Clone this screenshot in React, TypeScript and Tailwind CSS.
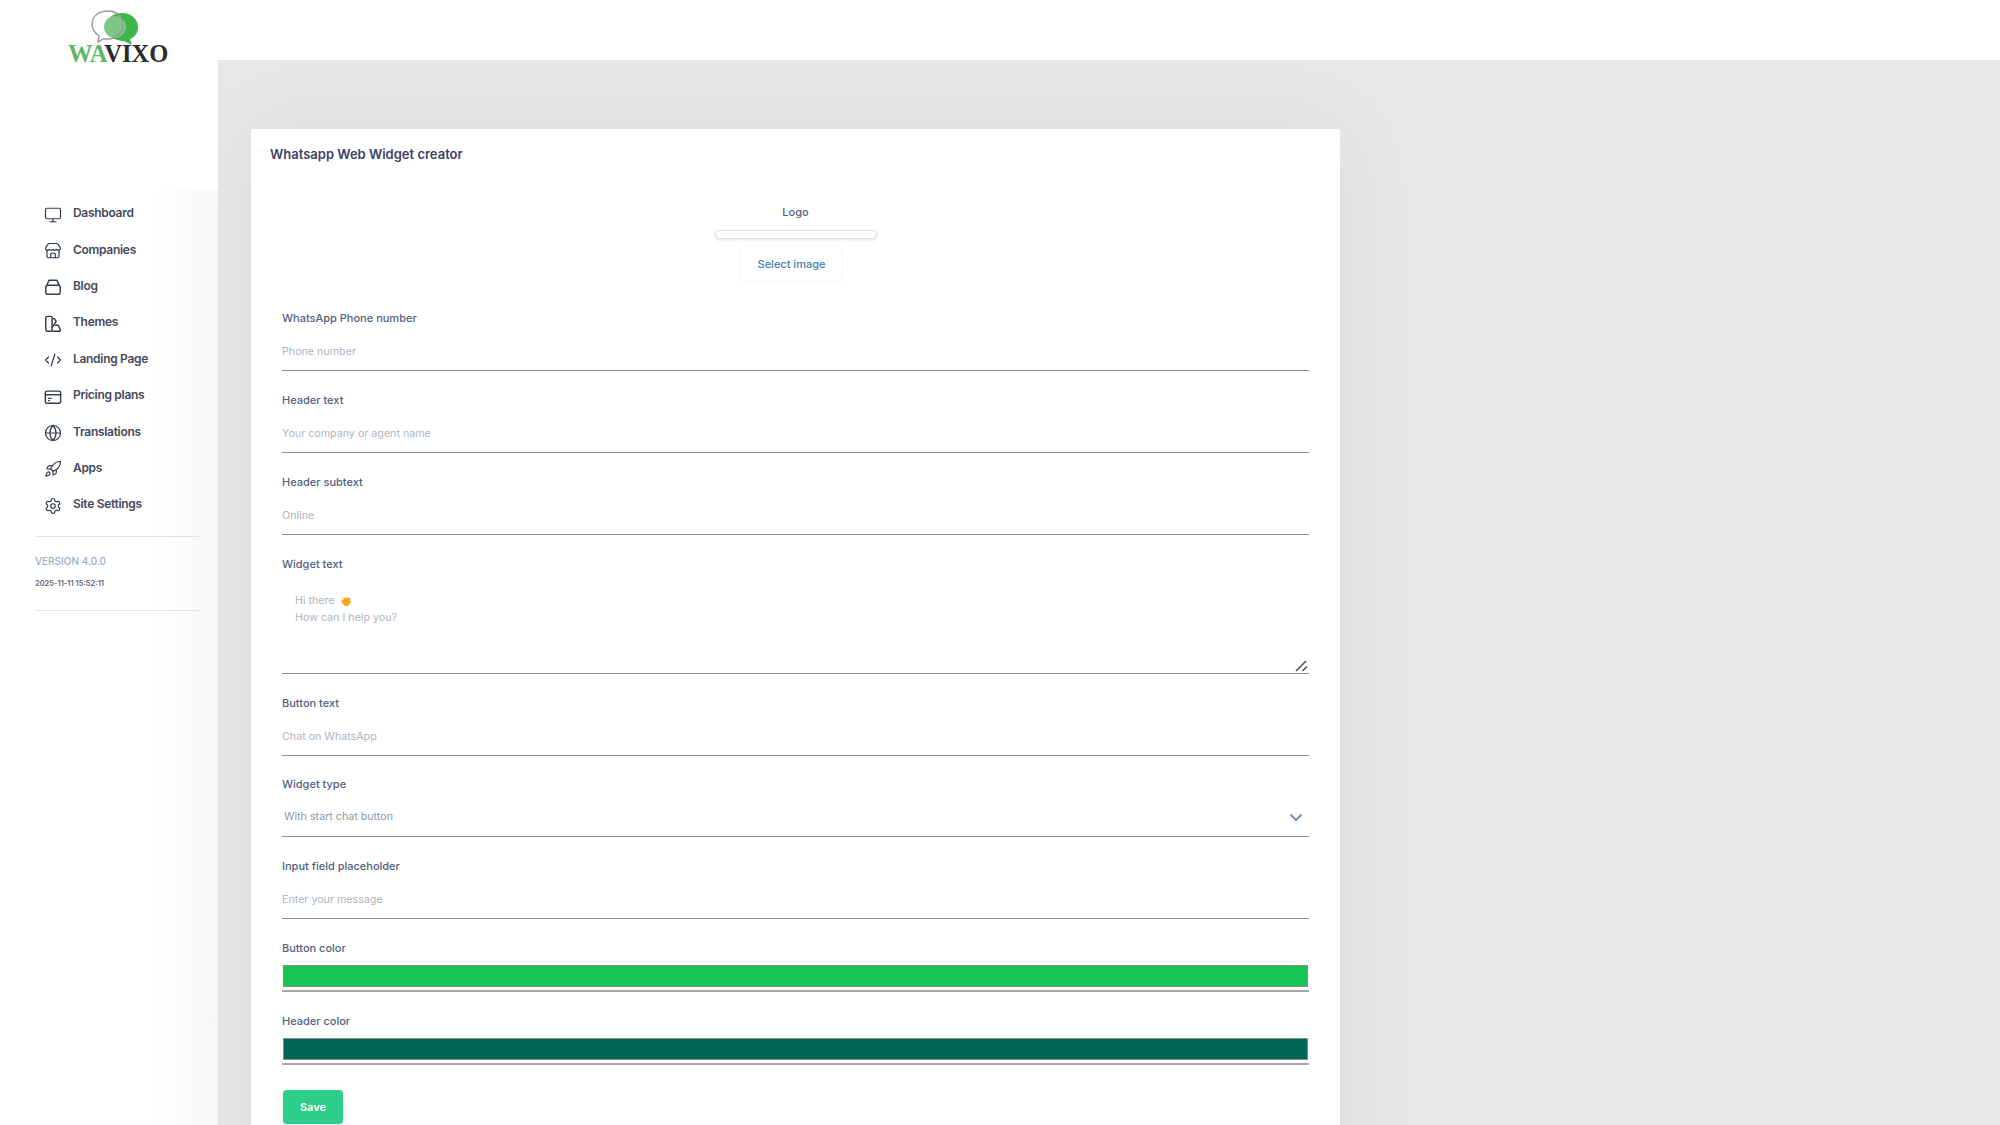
import React from "react";
import { Monitor, Store, CodeXml, Globe, Rocket, Settings } from "lucide-react";

const ic = { size: 20, strokeWidth: 1.6, color: "#343a4e" };

const BlogIcon = () => (
  <svg width="20" height="20" viewBox="0 0 20 20" fill="none" stroke="#343a4e" strokeWidth="1.6">
    <rect x="2" y="8" width="16" height="10" rx="2" />
    <path d="M3 8.5 5 3.5a1.5 1.5 0 0 1 1.4-1h7.2a1.5 1.5 0 0 1 1.4 1l2 5" />
  </svg>
);
const ThemeIcon = () => (
  <svg width="20" height="20" viewBox="0 0 20 20" fill="none" stroke="#343a4e" strokeWidth="1.6">
    <rect x="2" y="1.5" width="7" height="16.5" rx="1.5" />
    <path d="M9 4h2.5l2 3-4.5 7" />
    <path d="M9 18h8.5a.8.8 0 0 0 .7-1l-2-5a1 1 0 0 0-1-.6H12" />
  </svg>
);
const PricingIcon = () => (
  <svg width="20" height="20" viewBox="0 0 20 20" fill="none" stroke="#343a4e" strokeWidth="1.6">
    <rect x="1.5" y="3.5" width="17" height="13.5" rx="1.8" />
    <path d="M1.5 7.5h17" />
    <path d="M4.5 11.5h4M4.5 14h2" strokeWidth="1.2" />
  </svg>
);

const items: [string, React.ReactNode][] = [
  ["Dashboard", <Monitor {...ic} />],
  ["Companies", <Store {...ic} />],
  ["Blog", <BlogIcon />],
  ["Themes", <ThemeIcon />],
  ["Landing Page", <CodeXml {...ic} />],
  ["Pricing plans", <PricingIcon />],
  ["Translations", <Globe {...ic} />],
  ["Apps", <Rocket {...ic} />],
  ["Site Settings", <Settings {...ic} />],
];

const labelCls = "block h-5 mb-1 text-[11px] leading-5 font-medium text-[#525f7f]";
const inputCls =
  "block w-full h-[39px] border-b border-b-[#8f8f8f] bg-white text-[10.7px] text-[#525f7f] outline-none placeholder:text-[#adb5bd]";

function Field({ label, placeholder, tight }: { label: string; placeholder: string; tight?: boolean }) {
  return (
    <div className={tight ? "mb-[18px]" : "mb-[19px]"}>
      <label className={labelCls}>{label}</label>
      <input className={inputCls} placeholder={placeholder} />
    </div>
  );
}

function ColorField({ label, color }: { label: string; color: string }) {
  return (
    <div className="mb-[19px]">
      <label className={labelCls}>{label}</label>
      <div className="h-[30px] border-b-2 border-b-[#a8a8a8] pt-[3px] px-px">
        <div className="h-[22px] border border-[#8a8a8a]" style={{ backgroundColor: color }} />
      </div>
    </div>
  );
}

function Logo() {
  return (
    <div className="h-[190px] relative">
      <svg className="absolute left-[90px] top-[9px]" width="50" height="38" viewBox="0 0 50 38" fill="none">
        <path d="M32 4c9 0 16 6 16 14 0 6-3 10-8 12l2 6-8-4c-9 0-17-5-17-14S23 4 32 4z" fill="#3db54a" />
        <circle cx="25" cy="18" r="11" fill="#7fc684" />
        <path
          d="M18 2c9 0 15 6 15 14s-7 14-15 14l-5 0-5 3 1-6C5 24 2 20 2 15 2 7 9 2 18 2z"
          stroke="#9a9a9a"
          strokeWidth="1.4"
          fill="none"
        />
      </svg>
      <div className="absolute left-[68px] top-[42px] text-[24.5px] leading-[24px] font-bold whitespace-nowrap font-['Liberation_Serif',serif]">
        <span className="text-[#5cb867]">WA</span>
        <span className="text-[#2b2b2b]">VIXO</span>
      </div>
    </div>
  );
}

export default function App() {
  return (
    <div className="flex h-[1125px] overflow-hidden bg-white font-['Inter',sans-serif]">
      <aside className="w-[218px] shrink-0 flex flex-col bg-white">
        <Logo />
        <div className="flex-1 bg-gradient-to-r from-white from-70% to-[#f7f7fa] pl-[35px] pr-[19px] pt-[5px]">
          {items.map(([name, icon]) => (
            <div key={name} className="h-[36.4px] flex items-center">
              <span className="w-[18px] ml-[9px] mr-[11px] flex justify-center pt-[3px] shrink-0">{icon}</span>
              <span className="text-[12px] font-semibold text-[#454a5c] whitespace-nowrap tracking-[-0.3px]">{name}</span>
            </div>
          ))}
          <div className="mt-[13px] border-t border-[#e3e4e8] pt-[17px] pb-[19px]">
            <div className="text-[10px] leading-[15px] font-medium text-[#9fadc2] uppercase">Version 4.0.0</div>
            <div className="mt-[8px] text-[7.5px] leading-[14px] font-semibold text-[#5f6485]">2025-11-11 15:52:11</div>
          </div>
          <div className="border-t border-[#e3e4e8]" />
        </div>
      </aside>
      <main className="flex-1 flex flex-col min-w-0">
        <header className="h-[60px] bg-white shrink-0" />
        <div className="flex-1 bg-[#e8e8e8] pl-[33px] pt-[69px] overflow-hidden">
          <div className="w-[1089px] h-[1100px] bg-white rounded-[3px] shadow-[0_0_90px_rgba(50,50,93,0.07)]">
            <h3 className="pl-[19px] pt-[15px] text-[13px] leading-5 font-semibold text-[#3f3f68]">
              Whatsapp Web Widget creator
            </h3>
            <div className="px-[31px] pt-[38px]">
              <div className="flex flex-col items-center h-[106px]">
                <div className="text-[11px] leading-5 font-medium text-[#525f7f]">Logo</div>
                <div className="mt-[8px] w-[162px] h-[9px] rounded-full border border-[#dee2e6] bg-white shadow-[0_1px_3px_rgba(50,50,93,0.15)]" />
                <button className="mt-[7px] mr-[8px] w-[103px] h-[36px] rounded-[4px] border border-[#f6f7f9] bg-white text-[11px] font-medium text-[#3f82ac]">
                  Select image
                </button>
              </div>
              <Field label="WhatsApp Phone number" placeholder="Phone number" />
              <Field label="Header text" placeholder="Your company or agent name" />
              <Field label="Header subtext" placeholder="Online" />
              <div className="mb-[19px]">
                <label className={labelCls}>Widget text</label>
                <div className="relative">
                  <textarea
                    className="block w-full h-[96px] border-b border-b-[#8f8f8f] bg-white outline-none resize-none"
                    aria-label="Widget text"
                  />
                  <div className="absolute left-[13px] top-[14px] text-[10.7px] leading-[17px] text-[#adb5bd] pointer-events-none">
                    <div className="flex items-center gap-[5px]">
                      Hi there
                      <svg width="12" height="12" viewBox="0 0 12 12">
                        <path d="M1 6 5 2.5l5 .5.8 4.5L8 11H5L2.5 8.5z" fill="#f6a623" />
                        <path d="M1.5 3.5 3 2" stroke="#8cc4e8" strokeWidth="1" />
                      </svg>
                    </div>
                    <div>How can I help you?</div>
                  </div>
                  <svg className="absolute right-[1px] bottom-[2px]" width="13" height="13" viewBox="0 0 13 13" fill="none">
                    <path d="M1 12 11 2M7.5 12 12 7.5" stroke="#555" strokeWidth="1.6" />
                  </svg>
                </div>
              </div>
              <Field label="Button text" placeholder="Chat on WhatsApp" tight />
              <div className="mb-[19px]">
                <label className={labelCls}>Widget type</label>
                <div className="relative">
                  <select className={inputCls + " appearance-none pl-[2px] text-[#8898aa]"}>
                    <option>With start chat button</option>
                  </select>
                  <svg className="absolute right-[6px] top-[15px]" width="14" height="9" viewBox="0 0 14 9" fill="none">
                    <path d="M1.5 1.5 7 7l5.5-5.5" stroke="#7b93ad" strokeWidth="2" />
                  </svg>
                </div>
              </div>
              <Field label="Input field placeholder" placeholder="Enter your message" />
              <ColorField label="Button color" color="#17c554" />
              <ColorField label="Header color" color="#006554" />
              <button className="block mt-[25px] ml-px w-[60px] h-[34px] rounded-[4px] bg-[#2dce89] text-white text-[11px] font-semibold shadow-[0_2px_6px_rgba(50,50,93,0.12)]">
                Save
              </button>
            </div>
          </div>
        </div>
      </main>
    </div>
  );
}
